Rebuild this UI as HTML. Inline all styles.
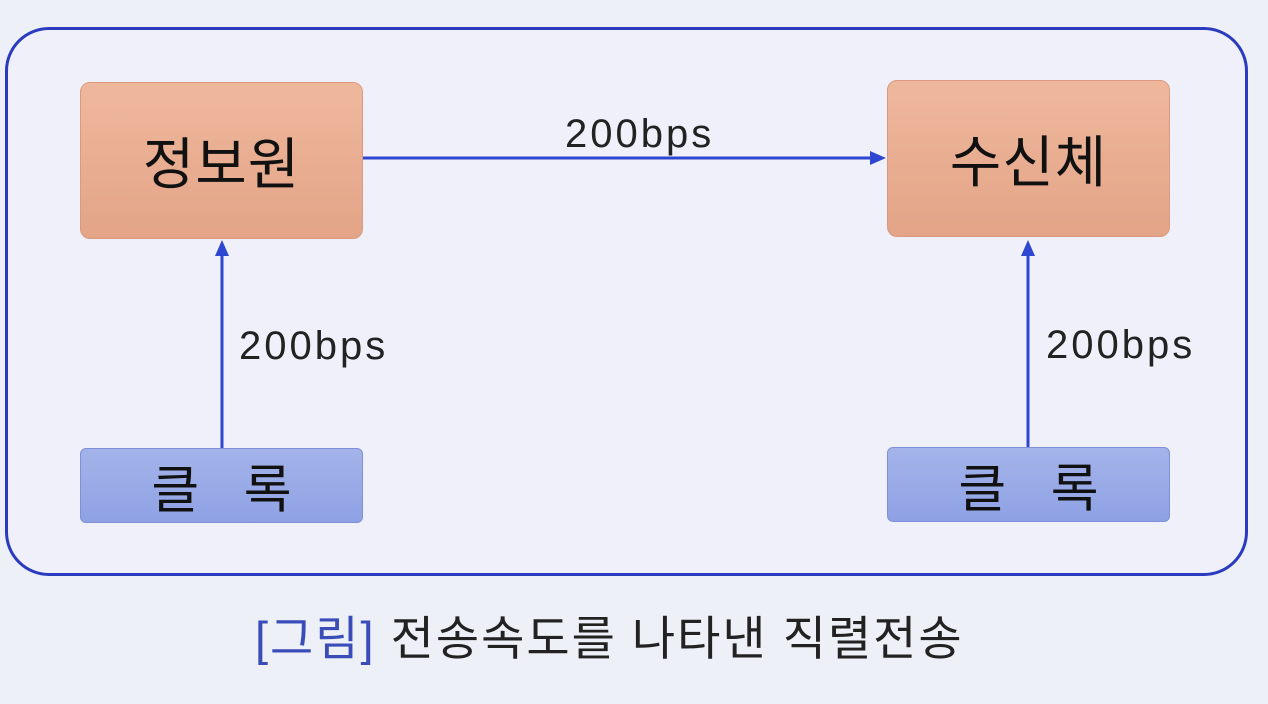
<!DOCTYPE html>
<html><head><meta charset="utf-8"><style>
body{margin:0;width:1268px;height:704px;background:#eef0f8;overflow:hidden;position:relative;font-family:"Liberation Sans","Noto Sans CJK KR",sans-serif;}
.outer{position:absolute;left:5px;top:27px;width:1237px;height:543px;border:3px solid #2a3bc0;border-radius:44px;background:#eff0f9;}
.o{position:absolute;width:283px;height:157px;border-radius:10px;background:linear-gradient(#efb89d,#e3a487);border:1px solid #d99a7f;display:flex;align-items:center;justify-content:center;font-size:56px;color:#111;box-sizing:border-box;letter-spacing:1px}
.b{position:absolute;width:283px;height:75px;border-radius:6px;background:linear-gradient(#a4b4ea,#8ea1e4);border:1px solid #7f91d6;display:flex;align-items:center;justify-content:center;font-size:52px;color:#111;box-sizing:border-box;word-spacing:30px}
.t{position:absolute;font-size:40px;color:#222;letter-spacing:3px}
</style></head><body>
<div class="outer"></div>
<svg width="1268" height="704" style="position:absolute;left:0;top:0">
<g stroke="#2f46d0" stroke-width="3" fill="#2f46d0">
<line x1="363" y1="158" x2="876" y2="158"/><polygon points="886,158 870,151 870,165" stroke="none"/>
<line x1="222" y1="448" x2="222" y2="252"/><polygon points="222,240 215,256 229,256" stroke="none"/>
<line x1="1028" y1="447" x2="1028" y2="252"/><polygon points="1028,240 1021,256 1035,256" stroke="none"/>
</g></svg>
<div class="o" style="left:80px;top:82px">정보원</div>
<div class="o" style="left:887px;top:80px">수신체</div>
<div class="b" style="left:80px;top:448px">클 록</div>
<div class="b" style="left:887px;top:447px">클 록</div>
<div class="t" style="left:565px;top:112px">200bps</div>
<div class="t" style="left:239px;top:324px">200bps</div>
<div class="t" style="left:1046px;top:323px">200bps</div>
<div style="position:absolute;left:255px;top:600px;font-size:47px;letter-spacing:2px;color:#222;white-space:nowrap"><span style="color:#3a4cb8">[그림]</span> 전송속도를 나타낸 직렬전송</div>
</body></html>
